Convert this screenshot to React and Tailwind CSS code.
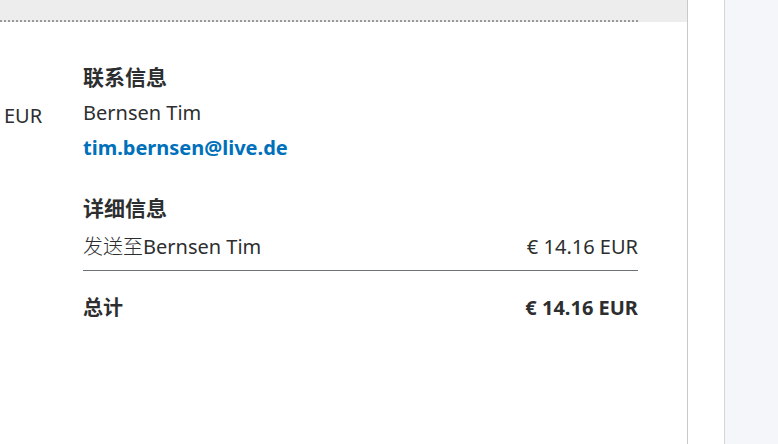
import React from "react";

const font = { fontFamily: '"Noto Sans", "Noto Sans CJK SC", sans-serif' };

const App = () => {
  return (
    <div className="flex h-[444px] w-[778px] overflow-hidden bg-white text-[#2c2e2f]" style={font}>
      {/* main panel */}
      <div className="flex w-[688px] flex-col border-r border-[#c8c8c8]">
        <div className="h-[22px] w-full bg-[#ededed]">
          <div className="mt-[20px] h-[2px] w-[638px] border-b-2 border-dotted border-[#9a9a9a]" />
        </div>
        <div className="flex">
          <div className="w-[83px] pl-[4px] pt-[80px] text-[20px] leading-[28px]">EUR</div>
          <div className="flex w-[555px] flex-col pt-[41px]">
            <h3 className="text-[21px] font-bold leading-[28px]">联系信息</h3>
            <p className="mt-[8px] text-[20px] leading-[28px]">Bernsen Tim</p>
            <p className="mt-[7px] text-[20px] font-bold leading-[28px] text-[#0070ba]">
              tim.bernsen@live.de
            </p>
            <h3 className="mt-[32px] text-[21px] font-bold leading-[28px]">详细信息</h3>
            <div className="mt-[11px] flex justify-between border-b border-[#6c7378] pb-[9px] text-[20px] leading-[28px]">
              <span>
                <span className="font-light">发送至</span>Bernsen Tim
              </span>
              <span>€ 14.16 EUR</span>
            </div>
            <div className="mt-[23px] flex justify-between text-[20px] font-bold leading-[28px]">
              <span>总计</span>
              <span>€ 14.16 EUR</span>
            </div>
          </div>
        </div>
      </div>
      {/* side strips */}
      <div className="w-[37px] border-r border-[#d6d6d6] bg-white" />
      <div className="flex-1 bg-[#f5f6fa]" />
    </div>
  );
};

export default App;
